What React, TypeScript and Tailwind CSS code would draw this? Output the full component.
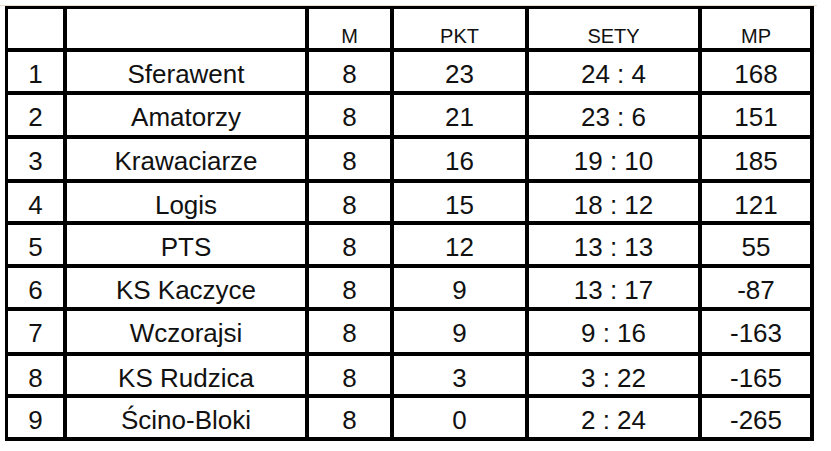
const ROWS = [
  { pos: 1, name: 'Sferawent', m: 8, pkt: 23, sety: '24 : 4', mp: 168 },
  { pos: 2, name: 'Amatorzy', m: 8, pkt: 21, sety: '23 : 6', mp: 151 },
  { pos: 3, name: 'Krawaciarze', m: 8, pkt: 16, sety: '19 : 10', mp: 185 },
  { pos: 4, name: 'Logis', m: 8, pkt: 15, sety: '18 : 12', mp: 121 },
  { pos: 5, name: 'PTS', m: 8, pkt: 12, sety: '13 : 13', mp: 55 },
  { pos: 6, name: 'KS Kaczyce', m: 8, pkt: 9, sety: '13 : 17', mp: -87 },
  { pos: 7, name: 'Wczorajsi', m: 8, pkt: 9, sety: '9 : 16', mp: -163 },
  { pos: 8, name: 'KS Rudzica', m: 8, pkt: 3, sety: '3 : 22', mp: -165 },
  { pos: 9, name: 'Ścino-Bloki', m: 8, pkt: 0, sety: '2 : 24', mp: -265 },
]

const HEADERS = ['', '', 'M', 'PKT', 'SETY', 'MP']

export default function App() {
  return (
    <div
      className="w-[831px] h-[451px] bg-white pt-[5px] text-[#111]"
      style={{ fontFamily: '"Liberation Sans", Arial, sans-serif' }}
    >
      <div className="h-px w-[817px] bg-[#e8dccb]" />
      <div className="ml-[5px] w-[809px] bg-black p-[3px] pr-[4px] pb-[4px]">
        <div className="grid grid-cols-[55px_238px_81px_131px_169px_108px] grid-rows-[39px_39px_40px_40px_38px_39px_39px_41px_38px_39px] gap-[4px]">
          {HEADERS.map((h, i) => (
            <div
              key={`h-${i}`}
              className="flex items-end justify-center bg-white pb-[2px] text-[20px] leading-[20px]"
            >
              {h}
            </div>
          ))}
          {ROWS.map((r) =>
            [r.pos, r.name, r.m, r.pkt, r.sety, r.mp].map((v, i) => (
              <div
                key={`${r.pos}-${i}`}
                className="flex items-start justify-center bg-white pt-[9px] text-[26px] leading-[26px] whitespace-nowrap"
              >
                {v}
              </div>
            ))
          )}
        </div>
      </div>
    </div>
  )
}
